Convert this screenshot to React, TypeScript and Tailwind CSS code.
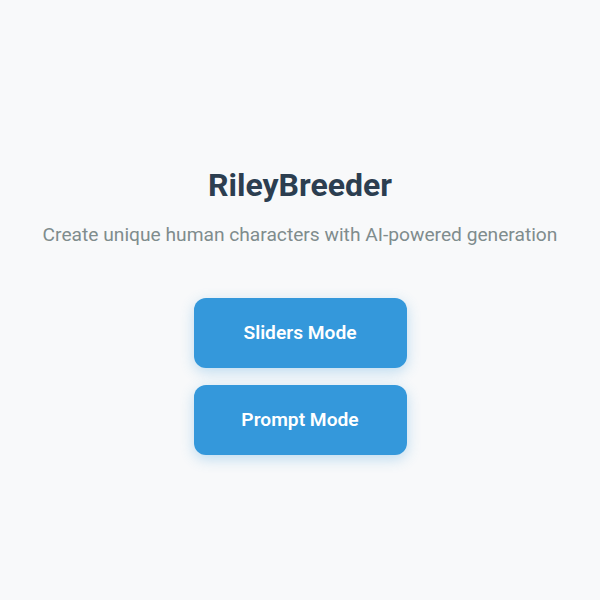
export default function App() {
  return (
    <div
      className="min-h-screen bg-[#f8f9fa] flex flex-col items-center justify-center pt-[24px]"
      style={{ fontFamily: "Roboto, 'Noto Sans', sans-serif" }}
    >
      <h1 className="text-[32px] font-bold text-[#2c3e50] leading-none">RileyBreeder</h1>
      <p className="mt-[24px] text-[19.2px] text-[#7f8c8d] leading-none">
        Create unique human characters with AI-powered generation
      </p>
      <div className="mt-[54px] flex flex-col gap-[17px]">
        <button className="w-[213px] h-[70px] rounded-xl bg-[#3498db] text-white text-[19.2px] font-semibold shadow-[0_4px_14px_rgba(52,152,219,0.3)]">
          Sliders Mode
        </button>
        <button className="w-[213px] h-[70px] rounded-xl bg-[#3498db] text-white text-[19.2px] font-semibold shadow-[0_4px_14px_rgba(52,152,219,0.3)]">
          Prompt Mode
        </button>
      </div>
    </div>
  );
}
